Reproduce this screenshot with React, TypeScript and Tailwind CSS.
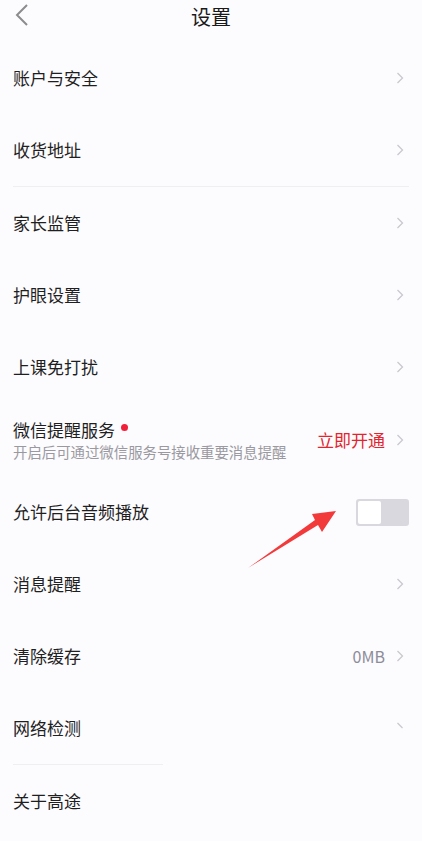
const rows1 = ["账户与安全", "收货地址"];
const rows2 = ["家长监管", "护眼设置", "上课免打扰"];

function Chevron({ half }: { half?: boolean }) {
  return (
    <svg width="8" height="12" viewBox="0 0 8 12" className="shrink-0">
      <polyline
        points={half ? "1.5,1 6.5,6" : "1.5,1 6.5,6 1.5,11"}
        fill="none"
        stroke="#c9c8ce"
        strokeWidth="1.3"
      />
    </svg>
  );
}

function Row({ label, right, arrow = "full" }: { label: string; right?: React.ReactNode; arrow?: "full" | "half" | "none" }) {
  return (
    <div className="h-[72px] flex items-center justify-between pl-[13px] pr-[18px]">
      <span className="text-[17px] text-[#1f1f1f]">{label}</span>
      <div className="flex items-center gap-[11px]">
        {right}
        {arrow !== "none" && <Chevron half={arrow === "half"} />}
      </div>
    </div>
  );
}

export default function App() {
  return (
    <div
      className="relative w-[422px] h-[841px] overflow-hidden bg-[#fcfbfe]"
      style={{ fontFamily: '"Noto Sans CJK SC", "Noto Sans", sans-serif' }}
    >
      {/* 顶部导航 */}
      <div className="relative h-[34px] flex items-center justify-center">
        <svg width="14" height="22" viewBox="0 0 14 22" className="absolute left-[15px] top-[4px]">
          <polyline points="12,1 2,11 12,21" fill="none" stroke="#8c8c8c" strokeWidth="2" />
        </svg>
        <span className="text-[20px] text-[#1a1a1a]">设置</span>
      </div>

      <div className="pt-[8px]">
        {rows1.map((r) => (
          <Row key={r} label={r} />
        ))}
        <div className="mx-[13px] h-px bg-[#efeef2]" />
        {rows2.map((r) => (
          <Row key={r} label={r} />
        ))}

        {/* 微信提醒 */}
        <div className="h-[73px] flex items-center justify-between pl-[13px] pr-[18px]">
          <div className="flex flex-col">
            <div className="flex items-start">
              <span className="text-[17px] leading-[24px] text-[#1f1f1f]">微信提醒服务</span>
              <span className="ml-[6px] mt-[6px] w-[7px] h-[7px] rounded-full bg-[#f0203a]" />
            </div>
            <span className="text-[14.4px] leading-[20px] text-[#9a99a0]">开启后可通过微信服务号接收重要消息提醒</span>
          </div>
          <div className="flex items-center gap-[11px]">
            <span className="text-[17px] text-[#e3242d]">立即开通</span>
            <Chevron />
          </div>
        </div>

        {/* 后台音频 */}
        <div className="h-[72px] flex items-center justify-between pl-[13px] pr-[13px]">
          <span className="text-[17px] text-[#1f1f1f]">允许后台音频播放</span>
          <div className="w-[53px] h-[27px] rounded-[3px] bg-[#d9d8df] p-[2px] flex">
            <div className="w-[23px] h-[23px] rounded-[2px] bg-white" />
          </div>
        </div>

        <Row label="消息提醒" />
        <Row label="清除缓存" right={<span className="text-[16px] text-[#8d8c99]">0MB</span>} />
        <Row label="网络检测" arrow="half" />
        <div className="ml-[13px] w-[150px] h-px bg-[#efeef2]" />
        <Row label="关于高途" arrow="none" />
      </div>

      {/* 标注箭头 */}
      <svg className="absolute left-0 top-0 pointer-events-none" width="422" height="841">
        <polygon
          points="248,568 315,520 312,514 336,511 322,532 318,525"
          fill="#f23a3a"
        />
      </svg>
    </div>
  );
}
